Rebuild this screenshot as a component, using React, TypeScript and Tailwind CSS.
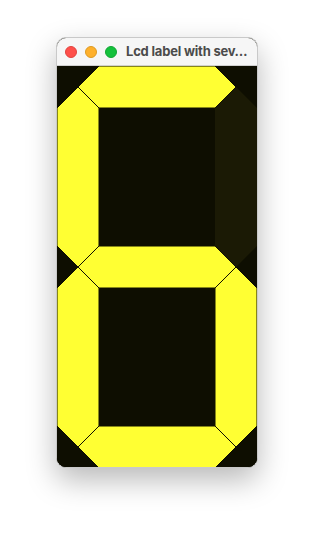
import React from "react";

const Y = "#ffff33";
const OFF = "#1b1a05";
const BG = "#0e0e01";

type Seg = { pts: string; on: boolean };

const segs: Seg[] = [
  { pts: "21,21 42,0 158,0 179,21 158,42 42,42", on: true },
  { pts: "21,201 42,180 158,180 179,201 158,222 42,222", on: true },
  { pts: "21,381 42,360 158,360 179,381 158,402 42,402", on: true },
  { pts: "21,21 42,42 42,180 21,201 0,180 0,42", on: true },
  { pts: "21,201 42,222 42,360 21,381 0,360 0,222", on: true },
  { pts: "179,21 200,42 200,180 179,201 158,180 158,42", on: false },
  { pts: "179,201 200,222 200,360 179,381 158,360 158,222", on: true },
];

export default function App() {
  return (
    <div className="w-[314px] h-[543px] bg-white pt-[37px] pl-[56px]">
      <div className="w-[202px] rounded-[10px] border border-[#c9c9c9] bg-[#0e0e01] overflow-hidden shadow-[0_12px_30px_rgba(0,0,0,0.28)]">
        <div className="h-[28px] bg-[#f6f6f6] flex items-center pl-[8px] border-b border-[#d0d0d0]">
          <div className="flex items-center gap-[8px]">
            <div className="w-[12px] h-[12px] rounded-full bg-[#fe4f4a] border border-[#e0443e]" />
            <div className="w-[12px] h-[12px] rounded-full bg-[#feb02b] border border-[#dd9a22]" />
            <div className="w-[12px] h-[12px] rounded-full bg-[#14c13c] border border-[#12a633]" />
          </div>
          <div
            className="ml-[9px] whitespace-nowrap text-[13px] font-bold text-[#4b4b4b] leading-none tracking-[-0.2px]"
            style={{ fontFamily: "Inter, 'Noto Sans', sans-serif" }}
          >
            Lcd label with sev…
          </div>
        </div>
        <div className="w-[200px] h-[401px]" style={{ background: BG }}>
          <svg width="200" height="402" viewBox="0 0 200 402" className="block">
            <rect x="0" y="0" width="200" height="402" fill={BG} />
            {segs.map((s, i) => (
              <polygon
                key={i}
                points={s.pts}
                fill={s.on ? Y : OFF}
                stroke={s.on ? BG : "none"}
                strokeWidth={1}
              />
            ))}
          </svg>
        </div>
      </div>
    </div>
  );
}
